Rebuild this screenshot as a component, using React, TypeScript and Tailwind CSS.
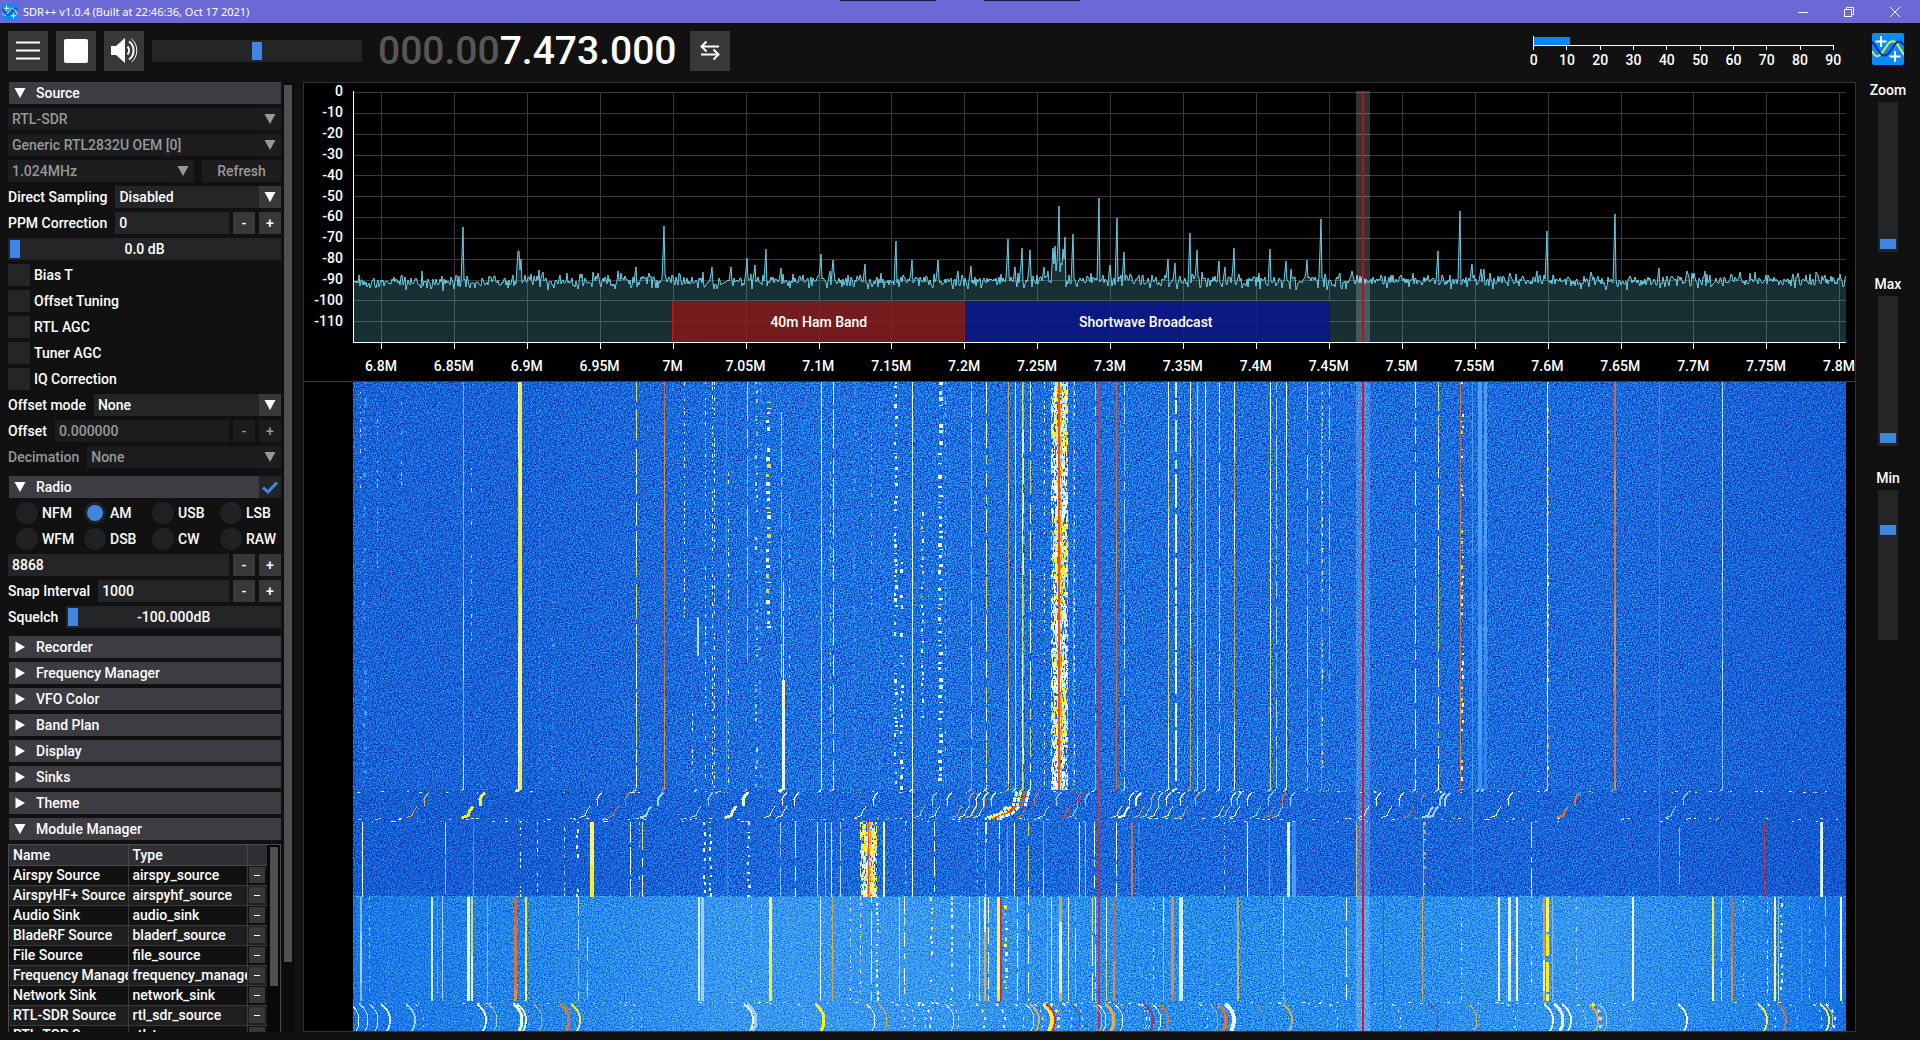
import { useState } from 'react';
import type { ReactNode } from 'react';

type Hue = 'white' | 'cream' | 'yellow' | 'orange' | 'red' | 'light' | 'faint' | 'gold';
type Pattern = 'solid' | 'dash' | 'dots';
type Trace = [x: number, hue: Hue, width: number, pattern: Pattern, from?: number, to?: number];

// Palette each trace picks its segments from
const hues: Record<Hue, string[]> = {
  white: ['#e9fbf4', '#cdf0ff', '#f4fbe0'],
  cream: ['#f2f6b4', '#e9fbf4', '#d8dc5c'],
  yellow: ['#ffee22', '#ffe81c', '#fff46a'],
  gold: ['#e0b040', '#f2f0a0', '#c8a850'],
  orange: ['#d8763a', '#e88a30', '#c26a50'],
  red: ['#c03040', '#b8304a', '#c83a3c'],
  light: ['#9fd2ff', '#7dbcff', '#b8e2ff'],
  faint: ['#2f86ec', '#4a9cf5', '#3a90f0'],
};

const modules = [
  ['Airspy Source', 'airspy_source'],
  ['AirspyHF+ Source', 'airspyhf_source'],
  ['Audio Sink', 'audio_sink'],
  ['BladeRF Source', 'bladerf_source'],
  ['File Source', 'file_source'],
  ['Frequency Manager', 'frequency_manager'],
  ['Network Sink', 'network_sink'],
  ['RTL-SDR Source', 'rtl_sdr_source'],
  ['RTL-TCP Source', 'rtl_tcp_source'],
];

const freqLabels = [
  '6.8M', '6.85M', '6.9M', '6.95M', '7M', '7.05M', '7.1M', '7.15M', '7.2M', '7.25M', '7.3M',
  '7.35M', '7.4M', '7.45M', '7.5M', '7.55M', '7.6M', '7.65M', '7.7M', '7.75M', '7.8M',
];

const dbLabels = ['0', '-10', '-20', '-30', '-40', '-50', '-60', '-70', '-80', '-90', '-100', '-110'];

const PLOT_W = 1493;

// Peaks of the spectrum: [x, level in px below the 0 dB line]
const peaks: [number, number][] = [
  [110, 136], [165, 160], [166, 160], [168, 168], [283, 176], [311, 135], [359, 176], [378, 176],
  [394, 167], [402, 174], [413, 158], [428, 177], [468, 163], [477, 180], [480, 169], [512, 173],
  [543, 150], [559, 169], [585, 169], [605, 180], [618, 175], [655, 148], [662, 176], [669, 157],
  [677, 159], [691, 176], [700, 157], [702, 155], [704, 170], [706, 115], [708, 172], [710, 158],
  [712, 146], [720, 143], [746, 107], [757, 174], [764, 127], [771, 161], [815, 168], [822, 172],
  [837, 142], [844, 159], [866, 170], [872, 176], [881, 157], [917, 158], [933, 170], [954, 169],
  [968, 128], [999, 180], [1085, 160], [1107, 120], [1119, 173], [1128, 178], [1131, 178],
  [1184, 180], [1194, 140], [1262, 123], [1306, 177], [1334, 180], [1387, 181], [1445, 182],
];

const upper: Trace[] = [
  [7, 'light', 1, 'dots', 10, 110], [24, 'light', 1, 'dots', 30, 190], [10, 'faint', 3, 'dots'],
  [48, 'light', 1, 'dots', 20, 120], [110, 'gold', 1, 'solid'], [118, 'light', 1, 'dots', 80, 260],
  [165, 'cream', 1, 'solid'], [166, 'yellow', 3, 'solid'], [186, 'faint', 1, 'dots'],
  [198, 'faint', 2, 'dots', 220, 400], [283, 'cream', 1, 'dash'], [311, 'orange', 1, 'solid'],
  [331, 'white', 1, 'dots', 0, 260], [339, 'white', 1, 'dots', 330, 400], [344, 'light', 2, 'dash', 235, 280],
  [352, 'white', 1, 'dots'], [359, 'white', 1, 'dots'], [361, 'white', 1, 'dots'],
  [373, 'faint', 1, 'solid'], [375, 'cream', 1, 'dots', 90, 400], [394, 'light', 1, 'dash', 0, 280],
  [402, 'light', 2, 'dots'], [406, 'faint', 2, 'dots'], [413, 'cream', 4, 'dots', 20, 250],
  [428, 'light', 1, 'dash', 30, 300], [430, 'white', 1, 'dash', 200, 300], [429, 'cream', 3, 'solid', 298, 407],
  [436, 'light', 1, 'dots', 110, 320], [468, 'cream', 1, 'solid'], [477, 'light', 1, 'dots', 80, 350],
  [480, 'white', 1, 'dash'], [500, 'faint', 2, 'dots'], [518, 'light', 1, 'dots', 50, 240],
  [526, 'faint', 1, 'dots'], [541, 'white', 3, 'dots'], [547, 'white', 3, 'dots', 180, 407],
  [559, 'white', 1, 'solid', 0, 439], [568, 'cream', 2, 'dots', 130, 350], [585, 'white', 4, 'dots'],
  [592, 'light', 1, 'dots'], [596, 'faint', 1, 'dots'], [618, 'light', 1, 'dash'], [633, 'cream', 1, 'dash'],
  [655, 'gold', 1, 'solid'], [662, 'cream', 1, 'solid'], [669, 'cream', 1, 'solid'], [670, 'gold', 1, 'dash'],
  [677, 'cream', 1, 'dash'], [691, 'white', 1, 'dots'], [720, 'orange', 1, 'solid'], [721, 'white', 1, 'dots'],
  [742, 'light', 1, 'dash'], [745, 'red', 2, 'solid'], [763, 'orange', 1, 'solid'], [764, 'red', 1, 'solid'],
  [771, 'light', 1, 'dash'],
  [815, 'cream', 1, 'solid'], [822, 'white', 2, 'dash'], [837, 'gold', 1, 'solid'], [844, 'light', 1, 'solid'],
  [852, 'cream', 1, 'solid'], [866, 'cream', 1, 'dash'], [881, 'gold', 1, 'solid'], [917, 'cream', 1, 'solid'],
  [923, 'light', 1, 'dash'], [933, 'white', 1, 'solid'], [954, 'light', 1, 'dash'], [968, 'orange', 1, 'solid'],
  [969, 'cream', 1, 'dots'], [976, 'light', 1, 'dash', 0, 300], [1062, 'white', 1, 'dash'],
  [1085, 'cream', 1, 'dash'], [1107, 'orange', 1, 'solid'], [1108, 'cream', 2, 'dots'],
  [1119, 'faint', 1, 'solid', 0, 514], [1125, 'faint', 4, 'solid'], [1126, 'light', 2, 'dash'],
  [1131, 'faint', 3, 'solid'], [1131, 'light', 2, 'solid'],
  [1194, 'cream', 1, 'solid'], [1195, 'gold', 1, 'dots'], [1261, 'orange', 2, 'solid'], [1262, 'yellow', 1, 'dots'],
  [1306, 'faint', 1, 'solid', 0, 514], [1369, 'light', 1, 'solid'],
];

const middle: Trace[] = [
  [9, 'cream', 1, 'solid'], [92, 'light', 1, 'dash'], [120, 'orange', 1, 'solid'], [167, 'white', 1, 'dots'],
  [184, 'cream', 1, 'dots'], [211, 'light', 1, 'dots'], [223, 'white', 2, 'dots'], [237, 'yellow', 4, 'solid'],
  [277, 'white', 1, 'dash'], [286, 'light', 1, 'dots'], [289, 'cream', 1, 'dash'], [350, 'white', 2, 'dots'],
  [356, 'white', 2, 'dots'], [374, 'faint', 1, 'solid'], [394, 'white', 3, 'dots'], [427, 'light', 1, 'dash'],
  [442, 'cream', 1, 'dash'], [464, 'cream', 1, 'solid'], [472, 'gold', 1, 'solid'], [478, 'cream', 1, 'solid'],
  [487, 'light', 1, 'dash'], [530, 'cream', 2, 'solid'], [552, 'light', 1, 'dots'], [559, 'white', 1, 'solid'],
  [574, 'red', 1, 'solid'], [581, 'white', 1, 'dash'], [624, 'light', 1, 'dots'], [632, 'white', 2, 'dash', 0, 20],
  [632, 'light', 1, 'dash'], [646, 'cream', 1, 'dash'], [654, 'orange', 1, 'solid'], [661, 'cream', 1, 'solid'],
  [675, 'cream', 1, 'dash'], [690, 'gold', 1, 'solid'], [726, 'cream', 1, 'solid'], [732, 'light', 1, 'dash'],
  [741, 'white', 1, 'dash'], [745, 'red', 2, 'solid', -32], [763, 'white', 1, 'dash'], [778, 'orange', 2, 'solid'],
  [785, 'faint', 1, 'dash'], [871, 'light', 1, 'dots'], [894, 'white', 1, 'solid'], [916, 'orange', 1, 'solid'],
  [934, 'white', 3, 'solid'], [939, 'faint', 4, 'solid'], [940, 'light', 2, 'dots'], [1003, 'gold', 1, 'solid'],
  [1070, 'gold', 2, 'dots'], [1070, 'gold', 1, 'solid'], [1178, 'white', 1, 'dash'], [1326, 'light', 1, 'dash', 5, 62],
  [1411, 'red', 1, 'solid'], [1467, 'light', 1, 'solid'], [1468, 'white', 2, 'solid'],
];

const lower: Trace[] = [
  [7, 'light', 2, 'solid'], [16, 'light', 1, 'dots'], [35, 'faint', 1, 'dots'], [78, 'white', 2, 'solid'],
  [84, 'orange', 1, 'dash'], [89, 'light', 1, 'solid'], [114, 'white', 3, 'solid'], [118, 'cream', 2, 'solid'],
  [134, 'gold', 1, 'solid'], [161, 'orange', 3, 'solid'], [172, 'yellow', 2, 'solid'], [225, 'light', 1, 'dash'],
  [234, 'light', 1, 'dash', 40, 100], [345, 'white', 2, 'solid'], [348, 'light', 3, 'solid'], [398, 'light', 1, 'dots'],
  [416, 'yellow', 3, 'solid'], [467, 'white', 1, 'solid'], [479, 'gold', 1, 'solid'], [497, 'white', 1, 'dots'],
  [507, 'cream', 1, 'dots'], [518, 'white', 1, 'dash'], [523, 'cream', 2, 'dots'], [546, 'cream', 1, 'solid'],
  [551, 'white', 1, 'dash'], [577, 'yellow', 2, 'dots'], [597, 'white', 2, 'dots'], [616, 'cream', 1, 'dash'],
  [626, 'cream', 1, 'solid'], [631, 'gold', 2, 'solid'], [635, 'white', 1, 'dash'], [644, 'yellow', 4, 'solid'],
  [647, 'red', 2, 'solid'], [651, 'yellow', 3, 'dots'], [654, 'orange', 1, 'solid'], [664, 'white', 1, 'dash'],
  [672, 'red', 1, 'solid'], [675, 'white', 1, 'dash'], [694, 'gold', 1, 'solid'], [698, 'white', 1, 'solid'],
  [704, 'orange', 1, 'solid'], [706, 'gold', 3, 'solid'], [715, 'white', 1, 'solid'], [722, 'gold', 1, 'dash'],
  [739, 'cream', 1, 'dash'], [742, 'white', 1, 'dash'], [745, 'red', 2, 'solid', 0, 134], [753, 'cream', 1, 'solid'],
  [760, 'orange', 2, 'solid'], [800, 'yellow', 1, 'dots'], [810, 'gold', 1, 'solid'], [818, 'orange', 3, 'solid'],
  [826, 'white', 4, 'solid'], [856, 'orange', 1, 'solid'], [884, 'gold', 2, 'solid'], [930, 'cream', 1, 'dash'],
  [993, 'white', 1, 'dash'], [1030, 'red', 1, 'solid'], [1069, 'gold', 1, 'solid'], [1108, 'white', 1, 'dots'],
  [1145, 'cream', 2, 'solid'], [1155, 'white', 3, 'solid'], [1163, 'white', 2, 'solid'], [1178, 'cream', 1, 'dots'],
  [1190, 'gold', 2, 'solid'], [1193, 'yellow', 3, 'dash'], [1199, 'light', 1, 'solid'], [1223, 'light', 1, 'dots'],
  [1279, 'white', 2, 'solid'], [1359, 'yellow', 2, 'solid'], [1368, 'white', 1, 'dash'], [1378, 'orange', 2, 'solid'],
  [1390, 'light', 1, 'dots'], [1414, 'white', 1, 'dots'], [1421, 'yellow', 2, 'solid'], [1425, 'light', 1, 'solid'],
  [1427, 'cream', 2, 'dots'], [1448, 'faint', 1, 'solid'], [1456, 'light', 1, 'dots'], [1472, 'light', 1, 'dash'],
  [1487, 'white', 2, 'solid'],
];

function makeRandom(seed: number) {
  let s = seed;
  return () => {
    s = (s * 1664525 + 1013904223) % 4294967296;
    return s / 4294967296;
  };
}

// Walks down every trace and groups its segments into one path per colour
function buildTraces(traces: Trace[], top: number, bottom: number, seed: number) {
  const rand = makeRandom(seed);
  const paths: Record<string, string> = {};
  traces.forEach(([x, hue, width, pattern, from = 0, to = bottom - top]) => {
    const end = top + to;
    let y = top + from;
    while (y < end) {
      const palette = hues[hue];
      let len = 20 + Math.floor(rand() * 60);
      let gap = 0;
      if (pattern === 'dash') {
        len = 6 + Math.floor(rand() * 34);
        gap = 1 + Math.floor(rand() * 9);
      } else if (pattern === 'dots') {
        len = 1 + Math.floor(rand() * 4);
        gap = 2 + Math.floor(rand() * (rand() > 0.9 ? 30 : 7));
      }
      len = Math.min(len, end - y);
      const color = palette[Math.floor(rand() * palette.length)];
      const shift = pattern === 'dots' && width > 1 ? Math.floor(rand() * 2) : 0;
      const w = pattern === 'dots' && width > 2 ? width - Math.floor(rand() * 2) : width;
      paths[color] = (paths[color] ?? '') + `M${x + shift} ${y}h${w}v${len}h-${w}z`;
      y += len + gap;
    }
  });
  return Object.entries(paths);
}

// Wide saturated carrier
function buildCarrier(x: number, width: number, top: number, bottom: number, seed: number) {
  const rand = makeRandom(seed);
  const paths: Record<string, string> = { '#f3faf0': '', '#ffee33': '', '#b9e4ff': '', '#ff9a1e': '' };
  const colors = Object.keys(paths);
  for (let y = top; y < bottom; y += 2) {
    // bursts lean towards yellow for a stretch, then fade back to white
    const heat = 0.35 + 0.3 * Math.sin(y / 23) + 0.15 * Math.sin(y / 7);
    for (let dx = 0; dx < width; dx += 1) {
      const near = 1 - Math.abs(dx - width / 2) / (width / 2);
      if (rand() > 0.34 + near * 0.5) continue;
      let pick = rand() < heat ? 1 : 0;
      if (near > 0.75 && rand() > 0.6) pick = 3;
      else if (rand() > 0.85) pick = 2;
      const len = Math.min(2 + Math.floor(rand() * 4), bottom - y);
      paths[colors[pick]] += `M${x + dx} ${y}h1v${len}h-1z`;
    }
  }
  return Object.entries(paths);
}

function buildSpectrum() {
  const rand = makeRandom(77);
  const levels: number[] = [];
  for (let x = 0; x <= PLOT_W; x += 1) {
    const center = x < 130 ? 191 : 190;
    levels.push(center + Math.round((rand() + rand() + rand() - 1.5) * 7) - (rand() > 0.97 ? 5 : 0));
  }
  peaks.forEach(([x, y]) => {
    levels[x] = y;
    levels[x - 1] = Math.min(levels[x - 1], Math.round((y + 190) / 2));
  });
  return levels.map((y, x) => `${x} ${y}`).join('L');
}

// While the VFO was dragged, every trace slid sideways
const dragPath = (x: number) =>
  `M${x} 407L${x - 3} 409M${x - 34} 410L${x - 37} 413L${x - 39} 417V423M${x - 46} 424L${x - 49} 428L${x - 51} 433L${x - 57} 435`;
const arcPath = (x: number) => `M${x + 46} 621C${x + 53} 626 ${x + 55} 632 ${x + 55} 637C${x + 55} 642 ${x + 54} 645 ${x + 52} 648`;

const spectrum = buildSpectrum();

function buildSpeckles() {
  const rand = makeRandom(5);
  let d = '';
  for (let i = 0; i < 330; i += 1) {
    const row = [408, 409, 435, 436, 438, 619, 620][Math.floor(rand() * 7)];
    const w = 1 + Math.floor(rand() * 3);
    d += `M${Math.floor(rand() * PLOT_W)} ${row}h${w}v1h-${w}z`;
  }
  return d;
}

function TraceGroup({ paths }: { paths: [string, string][] }) {
  return (
    <g>
      {paths.map(([color, d]) => (
        <path key={color} d={d} fill={color} />
      ))}
    </g>
  );
}

function Waterfall() {
  const draggable = upper.filter(([x, hue, , pattern]) => hue !== 'faint' && pattern !== 'dots' && x !== 745);
  return (
    <svg
      viewBox={`0 0 ${PLOT_W} 648`}
      preserveAspectRatio="none"
      shapeRendering="crispEdges"
      className="block h-full w-full"
      role="img"
      aria-label="Waterfall"
    >
      <defs>
        <filter id="noiseDark" x="0" y="0" width="100%" height="100%" colorInterpolationFilters="sRGB">
          <feTurbulence type="fractalNoise" baseFrequency="0.73" numOctaves="2" seed="3" />
          <feColorMatrix values="0.5 0 0 0 -0.15  1.15 0 0 0 -0.14  0.85 0 0 0 0.46  0 0 0 0 1" />
        </filter>
        <filter id="noiseLight" x="0" y="0" width="100%" height="100%" colorInterpolationFilters="sRGB">
          <feTurbulence type="fractalNoise" baseFrequency="0.73" numOctaves="2" seed="8" />
          <feColorMatrix values="0.8 0 0 0 -0.24  1.1 0 0 0 0.01  0.4 0 0 0 0.76  0 0 0 0 1" />
        </filter>
        <linearGradient id="shadeUpper">
          <stop offset="0" stopColor="#0030b0" stopOpacity="0.2" />
          <stop offset="0.12" stopColor="#0030b0" stopOpacity="0.2" />
          <stop offset="0.3" stopColor="#0030b0" stopOpacity="0" />
          <stop offset="0.55" stopColor="#0030b0" stopOpacity="0" />
          <stop offset="0.85" stopColor="#0030b0" stopOpacity="0.1" />
          <stop offset="1" stopColor="#0030b0" stopOpacity="0.3" />
        </linearGradient>
        <linearGradient id="shadeLower">
          <stop offset="0" stopColor="#0050d0" stopOpacity="0.4" />
          <stop offset="0.12" stopColor="#0050d0" stopOpacity="0.15" />
          <stop offset="0.25" stopColor="#66b0ff" stopOpacity="0.25" />
          <stop offset="0.4" stopColor="#66b0ff" stopOpacity="0.25" />
          <stop offset="0.6" stopColor="#0060e0" stopOpacity="0.05" />
          <stop offset="0.83" stopColor="#66b0ff" stopOpacity="0.25" />
          <stop offset="0.94" stopColor="#0050d0" stopOpacity="0.15" />
          <stop offset="1" stopColor="#0050d0" stopOpacity="0.5" />
        </linearGradient>
      </defs>

      <rect width={PLOT_W} height="514" filter="url(#noiseDark)" />
      <rect width={PLOT_W} height="514" fill="url(#shadeUpper)" />
      <rect y="407" width={PLOT_W} height="107" fill="#0030b0" opacity="0.1" />
      <rect y="514" width={PLOT_W} height="134" filter="url(#noiseLight)" />
      <rect y="514" width={PLOT_W} height="134" fill="url(#shadeLower)" />

      <TraceGroup paths={buildTraces(upper, 0, 407, 11)} />
      <TraceGroup paths={buildTraces(middle, 439, 514, 23)} />
      <TraceGroup paths={buildTraces(lower, 514, 618, 37)} />

      <g fill="none">
        {draggable.map(([x, hue, width]) => (
          <path key={`${x}-${hue}`} d={dragPath(x)} stroke={hues[hue][0]} strokeWidth={width} />
        ))}
        {lower.map(([x, hue, width, pattern]) => (
          <path
            key={`${x}-${hue}`}
            d={arcPath(x)}
            stroke={hues[hue][0]}
            strokeWidth={width}
            strokeDasharray={pattern === 'solid' ? undefined : '3 5'}
          />
        ))}
        {[-49, -40, -30, -18].map((x) => (
          <path key={x} d={arcPath(x)} stroke="#d4f0ff" strokeWidth={x === -18 ? 2 : 1} />
        ))}
        {[698, 702, 706, 710].map((x, i) => (
          <path
            key={x}
            d={`M${x - 34} 409L${x - 38} 423M${x - 44} 424L${x - 51} 431L${x - 66} 436`}
            stroke={i === 2 ? '#f0501a' : i === 1 ? '#ffee33' : '#f3faf0'}
            strokeWidth="3"
            strokeDasharray="5 1"
          />
        ))}
      </g>
      <path d={buildSpeckles()} fill="#dff2e0" />

      <TraceGroup paths={buildCarrier(698, 17, 0, 407, 41)} />
      <rect x="705" width="2" height="407" fill="#f0501a" />
      <TraceGroup paths={buildCarrier(507, 17, 439, 514, 43)} />
      <rect x="515" y="439" width="1" height="75" fill="#f0501a" />

      <rect x="1003" width="14" height="648" fill="#fff" opacity="0.2" />
      <rect x="1009" width="2" height="648" fill="#c81c34" />
    </svg>
  );
}

function Spectrum() {
  return (
    <div className="flex h-[299px] shrink-0 border-b border-[#3c3c3c]">
      <div className="flex h-[246px] w-[49px] shrink-0 flex-col justify-between pr-2.5 text-right leading-4">
        {dbLabels.map((label) => (
          <span key={label}>{label}</span>
        ))}
      </div>
      <svg className="mt-2 h-[290px] min-w-0 flex-1 overflow-visible" role="img" aria-label="Spectrum">
        <g stroke="#3a3a3a" shapeRendering="crispEdges">
          {dbLabels.map((label, i) => (
            <line key={label} x1="0" x2="100%" y1={1 + Math.round((i * 250) / 12)} y2={1 + Math.round((i * 250) / 12)} />
          ))}
          {freqLabels.map((label, i) => (
            <line key={label} x1={`${1.92 + i * 4.883}%`} x2={`${1.92 + i * 4.883}%`} y1="1" y2="251" />
          ))}
        </g>
        <svg width="100%" height="251" viewBox={`0 0 ${PLOT_W} 251`} preserveAspectRatio="none">
          <path d={`M0 251L${spectrum}V251Z`} fill="#6fdcec" fillOpacity="0.22" />
          <path d={`M${spectrum}`} fill="none" stroke="#6ccfe6" strokeWidth="1" />
          <rect x="320" y="210" width="292" height="41" fill="#8c1719" fillOpacity="0.8" />
          <rect x="319" y="210" width="1" height="41" fill="#c01418" />
          <rect x="612" y="210" width="364" height="41" fill="#0a1590" fillOpacity="0.85" />
          <rect x="976" y="210" width="1" height="41" fill="#0808e0" />
          <rect x="1003" width="14" height="251" fill="#fff" opacity="0.2" />
          <rect x="1009" width="2" height="251" fill="#b41420" />
        </svg>
        <g fill="#fff" textAnchor="middle">
          <text x="31.2%" y="236">40m Ham Band</text>
          <text x="53.1%" y="236">Shortwave Broadcast</text>
          {freqLabels.map((label, i) => (
            <text key={label} x={`${1.87 + i * 4.883}%`} y="280">{label}</text>
          ))}
        </g>
        <g stroke="#fff" shapeRendering="crispEdges">
          <line x1="0" x2="0" y1="0" y2="251" />
          <line x1="0" x2="100%" y1="251" y2="251" />
          {freqLabels.map((label, i) => (
            <line key={label} x1={`${1.92 + i * 4.883}%`} x2={`${1.92 + i * 4.883}%`} y1="251" y2="258" />
          ))}
        </g>
      </svg>
      <div className="w-[9px] shrink-0" />
    </div>
  );
}

function Triangle({ open = true }: { open?: boolean }) {
  return (
    <svg viewBox="0 0 12 12" className="h-3 w-3" fill="currentColor" aria-hidden="true">
      <path d={open ? 'M0.5 1h11L6 11z' : 'M1.5 0.5v11L11 6z'} />
    </svg>
  );
}

function Section({ title, open = false }: { title: string; open?: boolean }) {
  return (
    <button
      type="button"
      aria-expanded={open}
      className="ml-px flex h-[22px] min-w-0 flex-1 items-center gap-[10px] bg-[#3d3c42] pl-[5px] text-left"
    >
      <Triangle open={open} />
      {title}
    </button>
  );
}

function Combo({ label, value, disabled, hideLabel }: { label: string; value: string; disabled?: boolean; hideLabel?: boolean }) {
  return (
    <label className={`flex h-[22px] w-full min-w-0 items-center gap-2 ${disabled ? 'text-[#989898]' : ''}`}>
      {!hideLabel && <span className="whitespace-nowrap">{label}</span>}
      <span className={`flex h-[22px] min-w-0 flex-1 ${disabled ? 'bg-[#1a1c1d]' : 'bg-[#232527]'}`}>
        <select
          disabled={disabled}
          aria-label={label}
          className="min-w-0 flex-1 appearance-none bg-transparent px-1 opacity-100 outline-none"
        >
          <option>{value}</option>
        </select>
        <span className={`flex w-[22px] items-center justify-center ${disabled ? 'bg-[#1c1d1e]' : 'bg-[#38383a]'}`}>
          <Triangle />
        </span>
      </span>
    </label>
  );
}

function NumberField({ label, value, disabled, hideLabel }: { label: string; value: string; disabled?: boolean; hideLabel?: boolean }) {
  const [text, setText] = useState(value);
  const step = (delta: number) => setText(String(Number(text) + delta));
  const button = `w-[22px] text-center ${disabled ? 'bg-[#1c1c1d] text-[#989898]' : 'bg-[#38383a]'}`;
  return (
    <div className="flex h-[22px] shrink-0 gap-1">
      <label className="flex min-w-0 flex-1 items-center gap-2">
        {!hideLabel && <span className="whitespace-nowrap">{label}</span>}
        <input
          value={text}
          disabled={disabled}
          aria-label={label}
          onChange={(e) => setText(e.target.value)}
          className={`h-[22px] min-w-0 flex-1 px-1 outline-none ${disabled ? 'bg-[#1a1c1d] text-[#989898]' : 'bg-[#232527]'}`}
        />
      </label>
      <button type="button" disabled={disabled} onClick={() => step(-1)} aria-label={`Decrease ${label}`} className={button}>-</button>
      <button type="button" disabled={disabled} onClick={() => step(1)} aria-label={`Increase ${label}`} className={button}>+</button>
    </div>
  );
}

function Slider({ label, value, text }: { label: string; value: number; text?: string }) {
  return (
    <span className="relative flex min-w-0 flex-1">
      <input
        type="range"
        aria-label={label}
        defaultValue={value}
        className="h-[22px] w-full appearance-none bg-[#232527] px-[2px] outline-none [&::-webkit-slider-thumb]:h-[18px] [&::-webkit-slider-thumb]:w-[10px] [&::-webkit-slider-thumb]:appearance-none [&::-webkit-slider-thumb]:bg-[#4086e0]"
      />
      {text && <span className="pointer-events-none absolute inset-0 flex items-center justify-center">{text}</span>}
    </span>
  );
}

function VerticalSlider({ label, value }: { label: string; value: number }) {
  return (
    <label className="flex flex-col items-center gap-1">
      <span className="leading-4">{label}</span>
      <span className="flex h-[150px] w-5 justify-center bg-[#232527] pt-px pb-[3px]">
        <input
          type="range"
          defaultValue={value}
          className="h-full w-4 appearance-none bg-transparent outline-none [direction:rtl] [writing-mode:vertical-lr] [&::-webkit-slider-thumb]:h-[10px] [&::-webkit-slider-thumb]:w-4 [&::-webkit-slider-thumb]:appearance-none [&::-webkit-slider-thumb]:bg-[#4086e0]"
        />
      </span>
    </label>
  );
}

function CheckRow({ label }: { label: string }) {
  return (
    <label className="flex h-[22px] shrink-0 items-center gap-1">
      <input type="checkbox" className="h-[22px] w-[22px] appearance-none bg-[#232527] checked:bg-[#4086e0]" />
      {label}
    </label>
  );
}

function Modes() {
  const [mode, setMode] = useState('AM');
  return (
    <div className="grid shrink-0 grid-cols-[68px_68px_68px_auto] gap-y-1 pl-2">
      {['NFM', 'AM', 'USB', 'LSB', 'WFM', 'DSB', 'CW', 'RAW'].map((name) => (
        <label key={name} className="flex h-[22px] items-center gap-1">
          <input
            type="radio"
            name="mode"
            checked={mode === name}
            onChange={() => setMode(name)}
            className="h-[22px] w-[22px] shrink-0 appearance-none rounded-full border-[3px] border-[#1f2123] bg-[#1f2123] checked:bg-[#4086e0]"
          />
          {name}
        </label>
      ))}
    </div>
  );
}

function ModuleTable() {
  return (
    <div className="flex min-h-0 flex-1 items-start overflow-hidden border border-b-0 border-[#4a4a4e]">
      <table className="w-full table-fixed border-collapse text-left leading-[18px]">
        <thead>
          <tr className="h-5 border-b border-[#4a4a4e] bg-[#303034]">
            <th className="w-[119px] border-r border-[#45454a] px-1 py-0 font-medium">Name</th>
            <th className="border-r border-[#45454a] px-1 py-0 font-medium">Type</th>
            <th className="w-5 p-0" aria-label="Remove" />
          </tr>
        </thead>
        <tbody>
          {modules.map(([name, type]) => (
            <tr key={name} className="h-5 border-b border-[#3c3c3f] even:bg-[#1f1f1f]">
              <td className="overflow-hidden border-r border-[#3c3c3f] py-0 pr-0 pl-1 whitespace-nowrap">{name}</td>
              <td className="overflow-hidden border-r border-[#3c3c3f] py-0 pr-0 pl-1 whitespace-nowrap">{type}</td>
              <td className="p-0 px-px">
                <button type="button" aria-label={`Remove ${name}`} className="flex h-4 w-4 items-center justify-center bg-[#38383a]">
                  <span className="h-px w-1.5 bg-white" />
                </button>
              </td>
            </tr>
          ))}
        </tbody>
      </table>
      <div className="h-full w-[13px] shrink-0 bg-[#090909] px-[2px] pt-[2px]">
        <div className="ml-px h-[139px] w-2 bg-[#4f4f4f]" />
      </div>
    </div>
  );
}

function Sidebar() {
  return (
    <aside className="flex w-[295px] shrink-0 overflow-hidden pl-2">
      <div className="flex min-w-0 flex-1 flex-col gap-1">
        <div className="flex shrink-0"><Section title="Source" open /></div>
        <div className="flex shrink-0 flex-col gap-1">
          <Combo label="Source type" value="RTL-SDR" disabled hideLabel />
          <Combo label="Device" value="Generic RTL2832U OEM [0]" disabled hideLabel />
          <div className="flex gap-2">
            <Combo label="Sample rate" value="1.024MHz" disabled hideLabel />
            <button type="button" disabled className="h-[22px] w-[79px] shrink-0 bg-[#1c1c1d] text-[#989898]">Refresh</button>
          </div>
          <Combo label="Direct Sampling" value="Disabled" />
          <NumberField label="PPM Correction" value="0" />
          <Slider label="Gain" value={0} text="0.0 dB" />
          <CheckRow label="Bias T" />
          <CheckRow label="Offset Tuning" />
          <CheckRow label="RTL AGC" />
          <CheckRow label="Tuner AGC" />
          <CheckRow label="IQ Correction" />
          <Combo label="Offset mode" value="None" />
          <NumberField label="Offset" value="0.000000" disabled />
          <Combo label="Decimation" value="None" disabled />
        </div>

        <div className="mt-1 flex shrink-0">
          <Section title="Radio" open />
          <span className="relative h-[22px] w-[22px]">
            <input type="checkbox" defaultChecked aria-label="Enable Radio" className="block h-[22px] w-[22px] appearance-none bg-[#232527]" />
            <svg viewBox="0 0 22 22" className="pointer-events-none absolute inset-0" fill="none" stroke="#4086e0" strokeWidth="3" aria-hidden="true">
              <path d="M4 11.5l5 4.5L18 6.5" />
            </svg>
          </span>
        </div>
        <Modes />
        <NumberField label="Bandwidth" value="8868" hideLabel />
        <NumberField label="Snap Interval" value="1000" />
        <div className="flex h-[22px] shrink-0 items-center gap-2">
          <span>Squelch</span>
          <Slider label="Squelch" value={0} text="-100.000dB" />
        </div>

        <div className="mt-1 flex min-h-0 flex-1 flex-col gap-1">
          {['Recorder', 'Frequency Manager', 'VFO Color', 'Band Plan', 'Display', 'Sinks', 'Theme'].map((title) => (
            <div key={title} className="flex shrink-0"><Section title={title} /></div>
          ))}
          <div className="flex shrink-0"><Section title="Module Manager" open /></div>
          <ModuleTable />
        </div>
      </div>
      <div className="ml-[2px] w-3 shrink-0 bg-[#0c0c0c] pt-[3px] pl-px">
        <div className="h-[877px] w-2 bg-[#4f4f4f]" />
      </div>
    </aside>
  );
}

function Logo({ className }: { className: string }) {
  return (
    <svg viewBox="0 0 32 32" className={className} fill="none" aria-hidden="true">
      <rect width="32" height="32" rx="2" fill="#0a8aff" />
      <path d="M0 18C3 24 6 25 10 20L16 11C20 6 24 8 27 14L32 22" stroke="#e4ea3c" strokeWidth="2" />
      <path d="M0 9C3 12 6 17 8 20C12 25 16 22 19 17L23 11C26 7 29 8 32 12" stroke="#0b2f8c" strokeWidth="2" />
      <path d="M9 3v11M3.500 8.500h11M23 18v11M17.500 23.500h11" stroke="#fff" strokeWidth="2" />
    </svg>
  );
}

function TitleBar() {
  const control = 'flex h-full w-[46px] items-center justify-center';
  return (
    <header className="relative flex h-[23px] shrink-0 items-center bg-[#6b69d6] pr-[2px] font-['Open_Sans',sans-serif] text-[11px] font-normal">
      <div className="absolute inset-x-0 top-0 flex justify-center gap-12">
        <span className="h-px w-24 bg-[#1b1848]" />
        <span className="h-px w-24 bg-[#1b1848]" />
      </div>
      <Logo className="ml-[2px] h-4 w-4" />
      <h1 className="ml-[5px] flex-1 font-['Noto_Sans',sans-serif]">SDR++ v1.0.4 (Built at 22:46:36, Oct 17 2021)</h1>
      <button type="button" aria-label="Minimize" className={control}>
        <svg viewBox="0 0 10 10" className="h-[10px] w-[10px]" stroke="#fff"><path d="M0 5.500h10" /></svg>
      </button>
      <button type="button" aria-label="Restore" className={control}>
        <svg viewBox="0 0 10 10" className="h-[10px] w-[10px]" stroke="#fff" fill="none">
          <path d="M0.500 2.500h7v7h-7zM2.500 2.500v-2h7v7h-2" />
        </svg>
      </button>
      <button type="button" aria-label="Close" className={control}>
        <svg viewBox="0 0 10 10" className="h-[10px] w-[10px]" stroke="#fff"><path d="M0 0l10 10M10 0L0 10" /></svg>
      </button>
    </header>
  );
}

function ToolButton({ label, children }: { label: string; children: ReactNode }) {
  return (
    <button type="button" aria-label={label} className="h-10 w-10 bg-[#38383a]">
      <svg viewBox="0 0 40 40" className="h-10 w-10" fill="none" stroke="#fff" aria-hidden="true">{children}</svg>
    </button>
  );
}

function SnrMeter() {
  return (
    <div className="mt-[5px] mr-[22px] w-[333px]">
      <div className="mx-4 h-[10px] border-b border-l border-white pt-px">
        <div className="h-2 w-[12%] bg-[#0a86f8]" />
      </div>
      <div className="flex text-center leading-4">
        {[0, 10, 20, 30, 40, 50, 60, 70, 80, 90].map((value) => (
          <span key={value} className="flex flex-1 flex-col items-center gap-[2px]">
            <span className="h-1 w-px bg-white" />
            {value}
          </span>
        ))}
      </div>
    </div>
  );
}

function Toolbar() {
  return (
    <div className="flex h-[59px] shrink-0 items-start px-2 pt-2">
      <div className="flex gap-2">
        <ToolButton label="Toggle menu">
          <path d="M8 11.500h24M8 19.500h24M8 27.500h24" strokeWidth="2" />
        </ToolButton>
        <ToolButton label="Stop">
          <rect x="8" y="8" width="24" height="24" rx="2" fill="#fff" stroke="none" />
        </ToolButton>
        <ToolButton label="Mute">
          <path d="M7 15h5l9-8v25l-9-8H7z" fill="#fff" stroke="none" />
          <path d="M23.500 15.500a6 6 0 0 1 0 8M25 10.500c6 4 6 14 0 18" strokeWidth="2" />
          <path d="M27.500 8c7 5 7 18 0 23" strokeWidth="1" />
        </ToolButton>
        <div className="flex w-[210px] items-center"><Slider label="Volume" value={50} /></div>
      </div>
      <div className="mx-4 h-10 w-[296px] text-center text-[39px] leading-10 whitespace-nowrap">
        <span className="text-[#575757]">000.00</span>7.473.000
      </div>
      <ToolButton label="Tuning mode">
        <path d="M29 15.500H12M16.500 10.500l-5 5 5 5M11 23.500h17M23.500 18.500l5 5-5 5" strokeWidth="2" />
      </ToolButton>
      <div className="flex-1" />
      <SnrMeter />
      <Logo className="mt-[2px] mr-2 h-8 w-8" />
    </div>
  );
}

export default function App() {
  return (
    <div className="flex h-screen flex-col overflow-hidden bg-[#111111] font-['Roboto',sans-serif] text-sm font-medium text-white">
      <TitleBar />
      <Toolbar />
      <main className="flex min-h-0 flex-1 pb-2">
        <Sidebar />
        <section className="ml-2 flex min-w-0 flex-1 flex-col border border-[#333333] bg-black">
          <Spectrum />
          <div className="min-h-0 flex-1 pr-[9px] pl-[49px]">
            <Waterfall />
          </div>
        </section>
        <aside className="flex w-16 shrink-0 flex-col items-center gap-6">
          <VerticalSlider label="Zoom" value={0} />
          <VerticalSlider label="Max" value={0} />
          <VerticalSlider label="Min" value={75} />
        </aside>
      </main>
    </div>
  );
}
